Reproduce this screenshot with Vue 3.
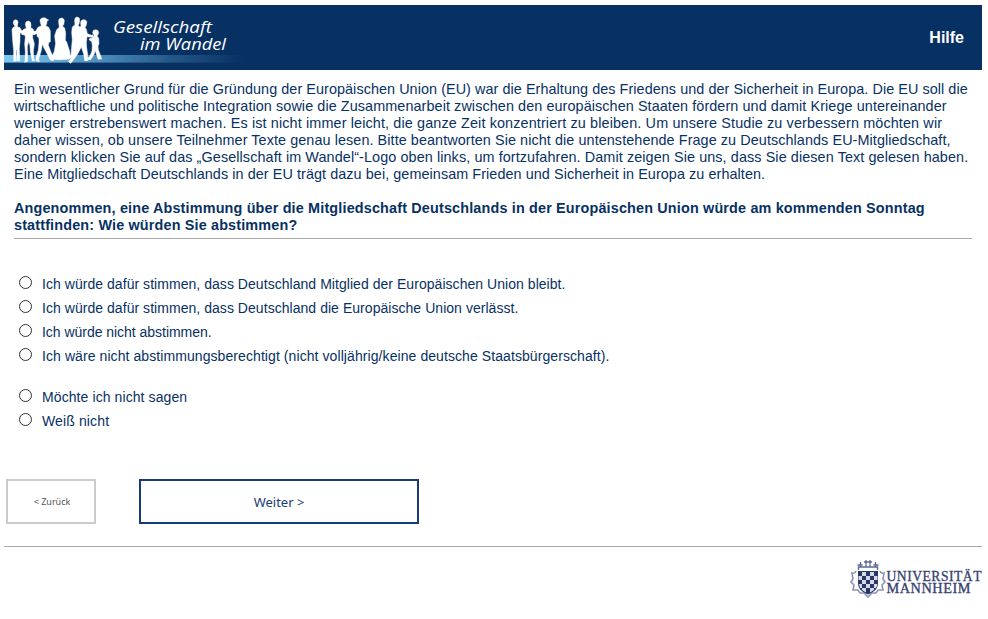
<script setup>
import { ref } from 'vue'

// Each line carries its own tracking in pixels.
const intro = [
  { text: 'Ein wesentlicher Grund für die Gründung der Europäischen Union (EU) war die Erhaltung des Friedens und der Sicherheit in Europa. Die EU soll die', tracking: 0.063 },
  { text: 'wirtschaftliche und politische Integration sowie die Zusammenarbeit zwischen den europäischen Staaten fördern und damit Kriege untereinander', tracking: 0.085 },
  { text: 'weniger erstrebenswert machen. Es ist nicht immer leicht, die ganze Zeit konzentriert zu bleiben. Um unsere Studie zu verbessern möchten wir', tracking: 0.128 },
  { text: 'daher wissen, ob unsere Teilnehmer Texte genau lesen. Bitte beantworten Sie nicht die untenstehende Frage zu Deutschlands EU-Mitgliedschaft,', tracking: 0.077 },
  { text: 'sondern klicken Sie auf das „Gesellschaft im Wandel“-Logo oben links, um fortzufahren. Damit zeigen Sie uns, dass Sie diesen Text gelesen haben.', tracking: 0.094 },
  { text: 'Eine Mitgliedschaft Deutschlands in der EU trägt dazu bei, gemeinsam Frieden und Sicherheit in Europa zu erhalten.', tracking: 0.07 },
]
const question = [
  { text: 'Angenommen, eine Abstimmung über die Mitgliedschaft Deutschlands in der Europäischen Union würde am kommenden Sonntag', tracking: 0.162 },
  { text: 'stattfinden: Wie würden Sie abstimmen?', tracking: 0.158 },
]
const groups = [
  [
    { text: 'Ich würde dafür stimmen, dass Deutschland Mitglied der Europäischen Union bleibt.', tracking: 0.045 },
    { text: 'Ich würde dafür stimmen, dass Deutschland die Europäische Union verlässt.', tracking: 0.045 },
    { text: 'Ich würde nicht abstimmen.', tracking: -0.03 },
    { text: 'Ich wäre nicht abstimmungsberechtigt (nicht volljährig/keine deutsche Staatsbürgerschaft).', tracking: 0.08 },
  ],
  [
    { text: 'Möchte ich nicht sagen', tracking: 0.09 },
    { text: 'Weiß nicht', tracking: 0.13 },
  ],
]
const answer = ref(null)
const track = (item) => ({ letterSpacing: item.tracking + 'px' })
</script>

<template>
  <div class="page">
    <header class="header">
      <svg class="logo" width="250" height="65" viewBox="4 5 250 65">
        <defs>
          <linearGradient id="band" x1="0" x2="1" y1="0" y2="0">
            <stop offset="0" stop-color="#7bcaf2" />
            <stop offset="0.38" stop-color="#4f91bf" />
            <stop offset="0.7" stop-color="#245788" />
            <stop offset="1" stop-color="#083163" />
          </linearGradient>
        </defs>
        <rect x="4" y="55" width="239" height="7.6" fill="url(#band)" />
        <g transform="scale(.33333)" fill="#fff" stroke="#fff" stroke-width="1.5">
          <ellipse cx="47" cy="68" rx="7" ry="8.500" />
          <path d="M43 74h9v6l8 3l4 8l8 3l-2 6l-10-2l0 25l-2 22l1 38h-7l-2-34l-2 0l1 34l-8 1l0-32l-3-30l-2-34l4-6l6-3z" />
          <path d="M76 74q0-11 9-11q9 1 8 14l-1 6l7 4l4 8l11-2l2 5l-14 6l-4-5l0 14l5 18l-3 22l1 24l5 5l-9 1l-6-28l-1-18l-4-13l-4 16l1 44l-9 3l1-5l1-26l-2-24l2-20l-1-6l-10-3l-2-5l8-10l8-3z" />
          <path d="M121 67l-1-7q3-7 11-7q8 0 10 5l5 2l-5 3l-1 9l-3 5l9 5l5 11l0 32l-5 3l-1 8l8 21l9 17l-3 3l-9 2l-4-9l-14-26l-5-12l-3 19l-8 27l2 7l-8-2l-3-7l8-26l2-22l0-14l-6-5l0-10l-12 5l-4-7l12-3l7-12l10-5z" />
          <path d="M176 67q-2-12 8-13q9 1 9 9l-2 11l-4 4l7 6l3 16l-1 21l4 5l9 28l3 20l-6 4l-32 1l-12-1l-2 4l-9-2l4-8l8-18l4-25l-1-4l-2-18l6-18l8-7z" />
          <path d="M224 62q-1-9 7-11q9 1 8 10l-2 11l-3 4l5 4l0 38l-3 10l-12 36l-6 9l-9 0l-2-4l6-3l2-27l2-20l-2-22l2-16l8-7z" />
          <path d="M242 69q-1-9 9-10q11 1 9 10l-2 9l-3 4l4 6l3 13l13 5l3-2l3 4l-4 4l-16-2l-2 18l1 15l3 20l-1 14l4 2l-3 3l-9 0l-3-20l-7-21l-11 21l-17 23l-4 5l-6-5l6-8l13-23l7-21l1-26l3-20l7-9z" />
          <path d="M278 98q0-9 9-9q9 1 9 9l-3 8l-2 3l5 5l1 17l-3 7l1 11l8 22l2 6l-11 1l-3-10l-5-16l-3 10l-11 17l-6 0l-4-4l7-5l7-17l1-17l-2-11l-7-5l0-4l8-2l7-7z" />
        </g>
        <g class="logo-text" fill="#fff">
          <text x="113" y="32.5" textLength="99" lengthAdjust="spacingAndGlyphs">Gesellschaft</text>
          <text x="140" y="49.6" textLength="86" lengthAdjust="spacingAndGlyphs">im Wandel</text>
        </g>
      </svg>
      <a class="help">Hilfe</a>
    </header>

    <main class="content">
      <p class="intro"><span v-for="line in intro" :key="line.text" class="line" :style="track(line)">{{ line.text }}</span></p>
      <h1 class="question"><span v-for="line in question" :key="line.text" class="line" :style="track(line)">{{ line.text }}</span></h1>
      <div class="options">
        <div v-for="(group, g) in groups" :key="g" class="group">
          <label v-for="option in group" :key="option.text" class="option">
            <input v-model="answer" type="radio" name="vote" class="radio" :value="option.text" />
            <span :style="track(option)">{{ option.text }}</span>
          </label>
        </div>
      </div>
    </main>

    <nav class="buttons">
      <button class="back">&lt; Zurück</button>
      <button class="next">Weiter &gt;</button>
    </nav>

    <footer class="footer">
      <svg width="132" height="40" viewBox="850 559 132 40">
        <g fill="none" stroke="#8d95b7" stroke-width="1.6">
          <path d="M856 571q-1 3-4 2l1 6l-2 3l3 3l-1 5l5 0l2 3l4 0l4 4l4-4l4 0l2-3l5 0l-1-5l3-3l-2-3l1-6q-3 1-4-2" />
          <path d="M858.500 570v-3h19v3M860.500 562v5M875.500 562v5M866 560v7M870 560v7M857.500 565h5M873.500 565h5M864 562h8" stroke="#5d6894" stroke-width="1.300" />
        </g>
        <path d="M858 571h20v12q0 8-10 11.500q-10-3.500-10-11.500z" fill="#263768" />
        <path d="M862 572h4v4h-4zM870 572h4v4h-4zM858.500 576h3.500v4h-3.500zM866 576h4v4h-4zM874 576h3.500v4h-3.500zM862 580h4v4h-4zM870 580h4v4h-4zM859 584h3v4h-2zM866 584h4v4h-4zM874 584h3v2l-1 2h-2zM862 588h4v4h-1l-3-2zM870 588h4v2l-3 2h-1z" fill="#d5d9e6" />
        <g class="uni-text" fill="#35416f">
          <text x="886.5" y="581" textLength="95.5" lengthAdjust="spacingAndGlyphs">UNIVERSITÄT</text>
          <text x="886.5" y="592.5" textLength="84.5" lengthAdjust="spacingAndGlyphs">MANNHEIM</text>
        </g>
      </svg>
    </footer>
  </div>
</template>

<style>
body { margin: 0; background: #fff; }
</style>

<style scoped>
.page {
  box-sizing: border-box;
  width: 988px;
  height: 619px;
  padding: 5px 6px 0 4px;
  overflow: hidden;
  font-family: "Liberation Sans", Arial, sans-serif;
  font-size: 14px;
  color: #083163;
}
.header {
  display: flex;
  justify-content: space-between;
  align-items: center;
  height: 65px;
  background: #083163;
}
.logo { display: block; }
.logo-text { font: italic 500 17px "Open Sans", "Noto Sans", sans-serif; }
.help { padding-right: 18px; color: #fff; font-size: 16px; font-weight: bold; }
.content { padding: 11px 10px 0; }
.intro, .question { margin: 0; font-size: 14.4px; line-height: 17px; }
.line { display: block; white-space: nowrap; }
.question { margin-top: 17px; padding-bottom: 4px; border-bottom: 1px solid #aaa; }
.options { display: flex; flex-direction: column; gap: 17px; padding-top: 33px; }
.option { display: flex; align-items: center; height: 24px; padding-left: 5px; white-space: nowrap; }
.radio {
  appearance: none;
  box-sizing: border-box;
  width: 13px;
  height: 13px;
  margin: 0 10px 3px 0;
  border: 1px solid #333;
  border-radius: 50%;
  background: #fff;
}
.radio:checked { background: radial-gradient(#083163 40%, #fff 45%); }
.buttons { display: flex; gap: 43px; margin-top: 46px; padding-left: 2px; }
.buttons button {
  box-sizing: border-box;
  height: 45px;
  padding: 0;
  background: #fff;
  font-family: "Noto Sans", "Open Sans", sans-serif;
}
.buttons .back { width: 90px; padding-left: 2px; border: 2px solid #ccc; color: #555; font-size: 9px; }
.buttons .next { width: 280px; padding-top: 1px; border: 2px solid #193a76; color: #193a76; font-size: 13px; }
.footer {
  display: flex;
  justify-content: flex-end;
  margin-top: 22px;
  padding-top: 12px;
  border-top: 1px solid #aaa;
}
.uni-text { font: 500 13.6px "Liberation Serif", serif; letter-spacing: .5px; stroke: #35416f; stroke-width: .3px; }
</style>
